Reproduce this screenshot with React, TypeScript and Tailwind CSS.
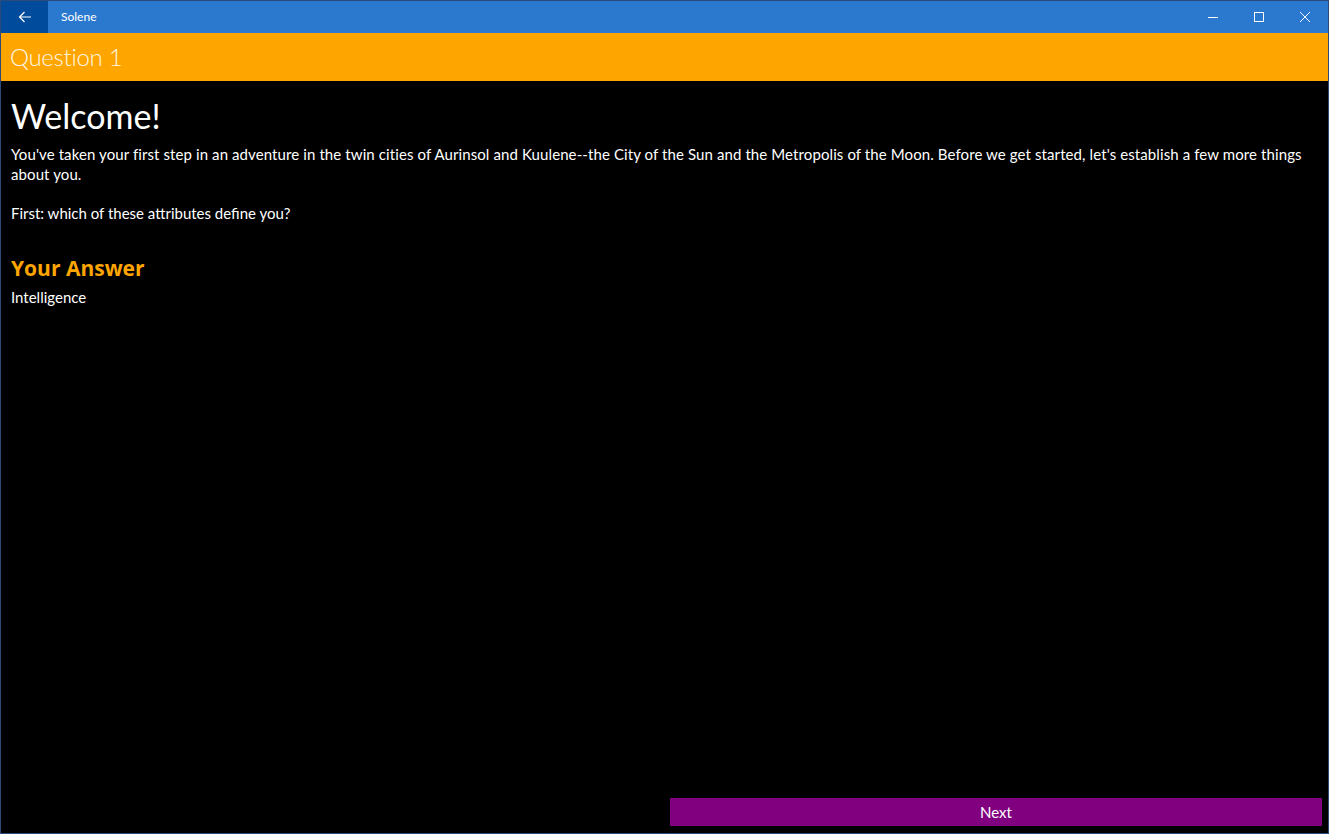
import React from "react";

export default function App() {
  const font = { fontFamily: '"Segoe UI", Lato, "Open Sans", sans-serif' };
  return (
    <div
      className="w-[1329px] h-[834px] bg-black border border-[#2b4a7a] flex flex-col text-white overflow-hidden"
      style={font}
    >
      {/* Title bar */}
      <div className="h-[32px] shrink-0 bg-[#2b79cf] flex items-stretch">
        <div className="w-[47px] bg-[#004b9b] flex items-center justify-center">
          <svg width="14" height="12" viewBox="0 0 14 12" fill="none" stroke="white" strokeWidth="1.2">
            <path d="M13 6H1.5M6.5 1L1.5 6l5 5" />
          </svg>
        </div>
        <div className="pl-[13px] flex items-center text-[12px] font-[Lato]">Solene</div>
        <div className="flex-1" />
        <div className="w-[46px] flex items-center justify-center">
          <div className="w-[10px] h-px bg-white" />
        </div>
        <div className="w-[46px] flex items-center justify-center">
          <div className="w-[10px] h-[10px] border border-white" />
        </div>
        <div className="w-[46px] flex items-center justify-center">
          <svg width="10" height="10" viewBox="0 0 10 10" stroke="white" strokeWidth="1">
            <path d="M0 0L10 10M10 0L0 10" />
          </svg>
        </div>
      </div>
      {/* Orange header */}
      <div className="h-[48px] shrink-0 bg-[#ffa500] flex items-center pl-[9px]">
        <span className="text-[24px] font-light leading-none text-[#fff7e6] tracking-[-0.3px]">Question 1</span>
      </div>
      {/* Content */}
      <div className="flex-1 flex flex-col px-[10px]">
        <h1 className="text-[34px] leading-[40px] mt-[15px]">Welcome!</h1>
        <p className="text-[15px] leading-[20px] mt-[8px] tracking-[0.1px]">
          You've taken your first step in an adventure in the twin cities of Aurinsol and Kuulene--the City of the Sun and the Metropolis of the Moon. Before we get started, let's establish a few more things about you.
        </p>
        <p className="text-[15px] leading-[20px] mt-[19px]">First: which of these attributes define you?</p>
        <h2
          className="text-[21px] leading-[28px] font-bold text-[#ffa500] mt-[31px]"
          style={{ fontFamily: '"Open Sans", Lato, sans-serif' }}
        >
          Your Answer
        </h2>
        <p className="text-[15px] leading-[20px] mt-[5px]">Intelligence</p>
        <div className="flex-1" />
      </div>
      <div className="flex justify-end pr-[6px] pb-[7px]">
        <button className="w-[652px] h-[28px] bg-[#800080] text-[15px] text-white flex items-center justify-center">
          Next
        </button>
      </div>
    </div>
  );
}
